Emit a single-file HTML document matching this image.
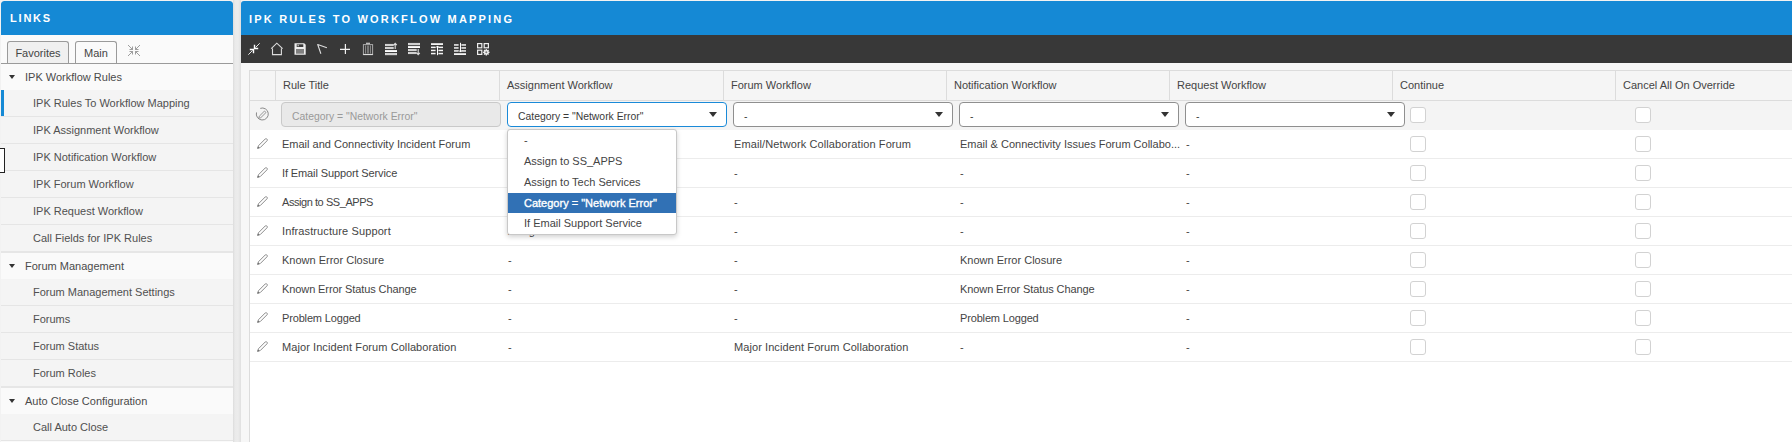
<!DOCTYPE html>
<html><head><meta charset="utf-8"><style>
*{box-sizing:border-box;margin:0;padding:0}
html,body{width:1792px;height:442px;overflow:hidden;background:linear-gradient(to right,#f2f2f2 0,#f2f2f2 233px,#dcdcdc 233px,#eaeaea 235px,#ececec 238px,#e0e0e0 241px,#f2f2f2 241px);font-family:"Liberation Sans",sans-serif;color:#444}
.abs{position:absolute}
#side{position:absolute;left:1px;top:1px;width:232px;height:441px;background:#fafafa;overflow:hidden;border-radius:3px 3px 0 0}
#side .hdr{position:absolute;left:0;top:0;width:232px;height:34px;background:#1589d5;border-radius:3px 3px 0 0}
#side .hdr span{position:absolute;left:9px;top:11px;color:#fff;font-size:11px;font-weight:bold;letter-spacing:1.8px}
.tab{position:absolute;top:40px;height:23px;border:1px solid #9a9a9a;border-bottom:none;border-radius:3px 3px 0 0;font-size:11px;color:#444;line-height:23px;text-align:center}
.tabline{position:absolute;left:0;top:62px;width:232px;height:1px;background:#9a9a9a}
.grp{position:absolute;left:0;width:232px;height:26px;background:#fafafa;font-size:11px;color:#4a4a4a;line-height:26px}
.grp .tri{position:absolute;left:8px;top:11px;width:0;height:0;border-left:3.5px solid transparent;border-right:3.5px solid transparent;border-top:4px solid #333}
.grp span{position:absolute;left:24px}
.ch{position:absolute;left:0;width:232px;height:27px;background:#f4f4f4;border-bottom:1px solid #e5e5e5;font-size:11px;color:#505050;line-height:26px}
.ch.last{height:28px;border-bottom:2px solid #e6e6e6}
.selbar{position:absolute;left:0;top:0;width:3px;height:26px;background:#1589d5}
.ch span{position:absolute;left:32px}
#main{position:absolute;left:241px;top:1px;width:1551px;height:441px;background:#f7f7f7;overflow:hidden;border-radius:3px 0 0 0}
#main .hdr{position:absolute;left:0;top:0;width:1551px;height:34px;background:#1589d5}
#main .hdr span{position:absolute;left:8px;top:12px;color:#fff;font-size:11px;font-weight:bold;letter-spacing:2.2px}
#tb{position:absolute;left:0;top:34px;width:1551px;height:28px;background:#383838}
#tb svg{position:absolute;top:8px}
#grid{position:absolute;left:249px;top:70px;width:1543px;height:372px;background:#fff;border-left:1px solid #dcdcdc;border-top:1px solid #dcdcdc}
.th{position:absolute;top:71px;height:30px;background:#f5f5f5;border-right:1px solid #dcdcdc;border-bottom:1px solid #dcdcdc;font-size:11px;color:#444;line-height:29px;padding-left:7px;white-space:nowrap}
.frow{position:absolute;left:250px;top:101px;width:1542px;height:29px;background:#f4f4f4}
.inp{position:absolute;left:281px;top:102px;width:220px;height:25px;background:#e9e9e9;border:1px solid #c9c9c9;border-radius:4px;font-size:10.4px;color:#999;line-height:27px;padding-left:10px;white-space:nowrap}
.sel{position:absolute;top:102px;width:220px;height:25px;background:#fff;border:1px solid #8f8f8f;border-radius:4px;font-size:10.4px;color:#3a3a3a;line-height:27px;padding-left:10px;white-space:nowrap}
.sel.focus{border:1.5px solid #1a8ad8}
.sel .arr{position:absolute;right:9px;top:9px;width:0;height:0;border-left:4.5px solid transparent;border-right:4.5px solid transparent;border-top:5px solid #333}
.cb{position:absolute;width:16px;height:16px;background:#fff;border:1px solid #d2d2d2;border-radius:3px;top:107px}
.row{position:absolute;left:250px;width:1542px;height:29px;border-bottom:1px solid #ececec;font-size:11px;color:#444;line-height:28px;white-space:nowrap}
.row span{position:absolute}
.row .cb{top:6px}
.pen{position:absolute;left:6px;top:7px}
#dd{position:absolute;left:507px;top:129px;width:170px;height:106px;background:#fff;border:1px solid #c8c8c8;border-radius:3px;box-shadow:0 2px 5px rgba(0,0,0,.18);font-size:11px;color:#444}
#dd div{position:absolute;left:0;width:168px;height:20px;line-height:20px;padding-left:16px;white-space:nowrap}
#dd div.hl{background:#3171b5;color:#fff;-webkit-text-stroke:0.35px #fff}
</style></head><body>
<div id="side">
<div class="hdr"><span>LINKS</span></div>
<div class="tab" style="left:6px;width:62px;background:#f0f0f0">Favorites</div>
<div class="tab" style="left:74px;width:42px;background:#fafafa">Main</div>
<svg class="abs" style="left:126px;top:43px" width="14" height="13" viewBox="0 0 14 13"><g fill="none" stroke="#8c8c8c" stroke-width="0.85"><path d="M1 1 L5.5 5.5 M5.5 2.5 V5.5 H2.5"/><path d="M13 1 L8.5 5.5 M8.5 2.5 V5.5 H11.5"/><path d="M1 12 L5.5 7.5 M5.5 10.5 V7.5 H2.5"/><path d="M13 12 L8.5 7.5 M8.5 10.5 V7.5 H11.5"/></g></svg>
<div class="tabline"></div>
<div class="grp" style="top:63px"><i class="tri"></i><span>IPK Workflow Rules</span></div>
<div class="ch" style="top:89px"><i class="selbar"></i><span>IPK Rules To Workflow Mapping</span></div>
<div class="ch" style="top:116px"><span>IPK Assignment Workflow</span></div>
<div class="ch" style="top:143px"><span>IPK Notification Workflow</span></div>
<div class="ch" style="top:170px"><span>IPK Forum Workflow</span></div>
<div class="ch" style="top:197px"><span>IPK Request Workflow</span></div>
<div class="ch last" style="top:224px"><span>Call Fields for IPK Rules</span></div>
<div class="grp" style="top:252px"><i class="tri"></i><span>Forum Management</span></div>
<div class="ch" style="top:278px"><span>Forum Management Settings</span></div>
<div class="ch" style="top:305px"><span>Forums</span></div>
<div class="ch" style="top:332px"><span>Forum Status</span></div>
<div class="ch last" style="top:359px"><span>Forum Roles</span></div>
<div class="grp" style="top:387px"><i class="tri"></i><span>Auto Close Configuration</span></div>
<div class="ch" style="top:413px"><span>Call Auto Close</span></div>
</div>
<div id="main">
<div class="hdr"><span>IPK RULES TO WORKFLOW MAPPING</span></div>
<div id="tb"></div>
</div>
<div id="grid"></div>
<div class="th" style="left:250px;width:26px"></div>
<div class="th" style="left:276px;width:224px">Rule Title</div>
<div class="th" style="left:500px;width:224px">Assignment Workflow</div>
<div class="th" style="left:724px;width:223px">Forum Workflow</div>
<div class="th" style="left:947px;width:223px">Notification Workflow</div>
<div class="th" style="left:1170px;width:223px">Request Workflow</div>
<div class="th" style="left:1393px;width:223px">Continue</div>
<div class="th" style="left:1616px;width:226px">Cancel All On Override</div>
<div class="frow"></div>
<svg class="abs" style="left:255px;top:107px" width="15" height="15" viewBox="0 0 15 15"><path d="M5.25 1.36 A6 6 0 1 1 1.5 5.45" fill="none" stroke="#8a8a8a" stroke-width="1"/><path d="M3.7 11.3 L4.3 9.2 L9.5 4 L11 5.5 L5.8 10.7 Z" fill="none" stroke="#8a8a8a" stroke-width="0.9" stroke-linejoin="round"/></svg>
<div class="inp">Category = "Network Error"</div>
<div class="sel focus" style="left:507px"><span>Category = "Network Error"</span><i class="arr"></i></div>
<div class="sel" style="left:733px"><span>-</span><i class="arr"></i></div>
<div class="sel" style="left:959px"><span>-</span><i class="arr"></i></div>
<div class="sel" style="left:1185px"><span>-</span><i class="arr"></i></div>
<div class="cb" style="left:1410px"></div>
<div class="cb" style="left:1635px"></div>
<div class="row" style="top:130px"><svg class="pen" width="13" height="13" viewBox="0 0 13 13"><path d="M1.6 11.4 L2.5 8.7 L9.3 1.9 Q10 1.3 10.7 1.9 L11.1 2.3 Q11.7 3 11.1 3.7 L4.3 10.5 Z" fill="none" stroke="#858585" stroke-width="0.95" stroke-linejoin="round"/><path d="M1.4 11.6 L2 9.6 L3.4 11 Z" fill="#666"/></svg><span style="left:32px">Email and Connectivity Incident Forum</span><span style="left:484px;letter-spacing:0.106px">Email/Network Collaboration Forum</span><span style="left:710px">Email &amp; Connectivity Issues Forum Collabo...</span><span style="left:936px">-</span><i class="cb" style="left:1160px"></i><i class="cb" style="left:1385px"></i></div>
<div class="row" style="top:159px"><svg class="pen" width="13" height="13" viewBox="0 0 13 13"><path d="M1.6 11.4 L2.5 8.7 L9.3 1.9 Q10 1.3 10.7 1.9 L11.1 2.3 Q11.7 3 11.1 3.7 L4.3 10.5 Z" fill="none" stroke="#858585" stroke-width="0.95" stroke-linejoin="round"/><path d="M1.4 11.6 L2 9.6 L3.4 11 Z" fill="#666"/></svg><span style="left:32px;letter-spacing:-0.117px">If Email Support Service</span><span style="left:484px">-</span><span style="left:710px">-</span><span style="left:936px">-</span><i class="cb" style="left:1160px"></i><i class="cb" style="left:1385px"></i></div>
<div class="row" style="top:188px"><svg class="pen" width="13" height="13" viewBox="0 0 13 13"><path d="M1.6 11.4 L2.5 8.7 L9.3 1.9 Q10 1.3 10.7 1.9 L11.1 2.3 Q11.7 3 11.1 3.7 L4.3 10.5 Z" fill="none" stroke="#858585" stroke-width="0.95" stroke-linejoin="round"/><path d="M1.4 11.6 L2 9.6 L3.4 11 Z" fill="#666"/></svg><span style="left:32px;letter-spacing:-0.438px">Assign to SS_APPS</span><span style="left:484px">-</span><span style="left:710px">-</span><span style="left:936px">-</span><i class="cb" style="left:1160px"></i><i class="cb" style="left:1385px"></i></div>
<div class="row" style="top:217px"><svg class="pen" width="13" height="13" viewBox="0 0 13 13"><path d="M1.6 11.4 L2.5 8.7 L9.3 1.9 Q10 1.3 10.7 1.9 L11.1 2.3 Q11.7 3 11.1 3.7 L4.3 10.5 Z" fill="none" stroke="#858585" stroke-width="0.95" stroke-linejoin="round"/><path d="M1.4 11.6 L2 9.6 L3.4 11 Z" fill="#666"/></svg><span style="left:32px;letter-spacing:0.110px">Infrastructure Support</span><span style="left:258px">Assign to Tech Services</span><span style="left:484px">-</span><span style="left:710px">-</span><span style="left:936px">-</span><i class="cb" style="left:1160px"></i><i class="cb" style="left:1385px"></i></div>
<div class="row" style="top:246px"><svg class="pen" width="13" height="13" viewBox="0 0 13 13"><path d="M1.6 11.4 L2.5 8.7 L9.3 1.9 Q10 1.3 10.7 1.9 L11.1 2.3 Q11.7 3 11.1 3.7 L4.3 10.5 Z" fill="none" stroke="#858585" stroke-width="0.95" stroke-linejoin="round"/><path d="M1.4 11.6 L2 9.6 L3.4 11 Z" fill="#666"/></svg><span style="left:32px">Known Error Closure</span><span style="left:258px">-</span><span style="left:484px">-</span><span style="left:710px">Known Error Closure</span><span style="left:936px">-</span><i class="cb" style="left:1160px"></i><i class="cb" style="left:1385px"></i></div>
<div class="row" style="top:275px"><svg class="pen" width="13" height="13" viewBox="0 0 13 13"><path d="M1.6 11.4 L2.5 8.7 L9.3 1.9 Q10 1.3 10.7 1.9 L11.1 2.3 Q11.7 3 11.1 3.7 L4.3 10.5 Z" fill="none" stroke="#858585" stroke-width="0.95" stroke-linejoin="round"/><path d="M1.4 11.6 L2 9.6 L3.4 11 Z" fill="#666"/></svg><span style="left:32px;letter-spacing:-0.096px">Known Error Status Change</span><span style="left:258px">-</span><span style="left:484px">-</span><span style="left:710px;letter-spacing:-0.096px">Known Error Status Change</span><span style="left:936px">-</span><i class="cb" style="left:1160px"></i><i class="cb" style="left:1385px"></i></div>
<div class="row" style="top:304px"><svg class="pen" width="13" height="13" viewBox="0 0 13 13"><path d="M1.6 11.4 L2.5 8.7 L9.3 1.9 Q10 1.3 10.7 1.9 L11.1 2.3 Q11.7 3 11.1 3.7 L4.3 10.5 Z" fill="none" stroke="#858585" stroke-width="0.95" stroke-linejoin="round"/><path d="M1.4 11.6 L2 9.6 L3.4 11 Z" fill="#666"/></svg><span style="left:32px;letter-spacing:-0.154px">Problem Logged</span><span style="left:258px">-</span><span style="left:484px">-</span><span style="left:710px;letter-spacing:-0.154px">Problem Logged</span><span style="left:936px">-</span><i class="cb" style="left:1160px"></i><i class="cb" style="left:1385px"></i></div>
<div class="row" style="top:333px"><svg class="pen" width="13" height="13" viewBox="0 0 13 13"><path d="M1.6 11.4 L2.5 8.7 L9.3 1.9 Q10 1.3 10.7 1.9 L11.1 2.3 Q11.7 3 11.1 3.7 L4.3 10.5 Z" fill="none" stroke="#858585" stroke-width="0.95" stroke-linejoin="round"/><path d="M1.4 11.6 L2 9.6 L3.4 11 Z" fill="#666"/></svg><span style="left:32px;letter-spacing:0.079px">Major Incident Forum Collaboration</span><span style="left:258px">-</span><span style="left:484px;letter-spacing:0.079px">Major Incident Forum Collaboration</span><span style="left:710px">-</span><span style="left:936px">-</span><i class="cb" style="left:1160px"></i><i class="cb" style="left:1385px"></i></div>
<div id="dd">
<div style="top:0px;height:21px;line-height:21px">-</div>
<div style="top:21px;height:21px;line-height:21px">Assign to SS_APPS</div>
<div style="top:42px;height:21px;line-height:21px">Assign to Tech Services</div>
<div class="hl" style="top:63px;height:20px;line-height:20px">Category = "Network Error"</div>
<div style="top:83px;height:21px;line-height:21px">If Email Support Service</div>
</div>
<svg class="abs" style="left:247px;top:42px" width="14" height="14" viewBox="0 0 14 14"><g stroke="#e6e6e6" fill="none" stroke-width="1"><path d="M1.3 12.7 L5.5 8.5 M8.5 5.5 L12.7 1.3"/></g><g stroke="#fff" fill="none" stroke-width="1.4"><path d="M7.5 2.8 V6.5 H11.2"/><path d="M2.8 7.5 H6.5 V11.2"/></g></svg>
<svg class="abs" style="left:270px;top:42px" width="14" height="14" viewBox="0 0 14 14"><path d="M1.2 6.6 L6.8 1.2 L12.6 6.6 M2.5 6.6 V12.6 H11.4 V6.6" fill="none" stroke="#ddd" stroke-width="1.1"/></svg>
<svg class="abs" style="left:293px;top:42px" width="14" height="14" viewBox="0 0 14 14"><path d="M1.5 1.3 H11.2 L12.7 2.8 V12.7 H1.5 Z" fill="#eee"/><rect x="3.7" y="2.3" width="6.6" height="2.7" fill="#3a3a3a"/><rect x="4.6" y="2.7" width="1.1" height="1.6" fill="#ddd"/><rect x="3" y="7" width="8" height="4.7" fill="#808080"/></svg>
<svg class="abs" style="left:316px;top:43px" width="12" height="12" viewBox="0 0 12 12"><path d="M4.9 10.8 L1.7 1.5 L10.9 4.7" fill="none" stroke="#ddd" stroke-width="1.1" stroke-linejoin="round"/></svg>
<svg class="abs" style="left:339px;top:43px" width="12" height="12" viewBox="0 0 12 12"><path d="M1 6.4 H11 M6.4 1 V11" fill="none" stroke="#f2f2f2" stroke-width="1.2"/></svg>
<svg class="abs" style="left:362px;top:42px" width="12" height="14" viewBox="0 0 12 14"><path d="M4 1.3 H8" stroke="#ccc" stroke-width="1.2"/><rect x="1.4" y="2.6" width="9.2" height="9.9" fill="none" stroke="#aaa" stroke-width="1"/><path d="M1.2 12.5 H10.8" stroke="#ddd" stroke-width="1.2"/><path d="M3.6 3.5 V11.5 M8.4 3.5 V11.5" stroke="#999" stroke-width="0.9"/><rect x="5" y="3.5" width="2" height="8" fill="#777"/></svg>
<svg class="abs" style="left:384px;top:42px" width="14" height="14" viewBox="0 0 14 14"><g fill="#d0d0d0" stroke="#f4f4f4" stroke-width="0.5"><rect x="1.25" y="2.2" width="8" height="1.6"/><rect x="1.25" y="5.2" width="8" height="1.6"/><rect x="1.25" y="11.2" width="11.5" height="1.7"/></g><rect x="1" y="8.1" width="12" height="1.9" fill="#fff"/><path d="M11.2 7 V1.5 M9.6 3.2 L11.2 1.3 L12.8 3.2" fill="none" stroke="#ddd" stroke-width="1.1"/></svg>
<svg class="abs" style="left:407px;top:42px" width="14" height="14" viewBox="0 0 14 14"><g fill="#d0d0d0" stroke="#f4f4f4" stroke-width="0.5"><rect x="1.25" y="1.2" width="11.5" height="1.7"/><rect x="1.25" y="7.2" width="8" height="1.6"/><rect x="1.25" y="10.2" width="8" height="1.6"/></g><rect x="1" y="4.1" width="12" height="1.9" fill="#fff"/><path d="M11.2 7 V12.5 M9.6 10.8 L11.2 12.7 L12.8 10.8" fill="none" stroke="#ddd" stroke-width="1.1"/></svg>
<svg class="abs" style="left:430px;top:42px" width="14" height="14" viewBox="0 0 14 14"><g fill="#f4f4f4"><rect x="1" y="1.2" width="12" height="1.8"/><rect x="1" y="4.6" width="4.6" height="1.5"/><rect x="8.4" y="4.6" width="4.6" height="1.5"/><rect x="1" y="7.7" width="4.6" height="1.5"/><rect x="8.4" y="7.7" width="4.6" height="1.5"/><rect x="1" y="10.8" width="4.6" height="1.5"/><rect x="8.4" y="10.8" width="4.6" height="1.5"/></g><path d="M7.5 13.2 V4 M6 5.6 L7.5 3.9 L9 5.6" fill="none" stroke="#fff" stroke-width="1"/></svg>
<svg class="abs" style="left:453px;top:42px" width="14" height="14" viewBox="0 0 14 14"><g fill="#f4f4f4"><rect x="1" y="11.2" width="12" height="1.8"/><rect x="1" y="2.2" width="4.6" height="1.5"/><rect x="8.4" y="2.2" width="4.6" height="1.5"/><rect x="1" y="5.2" width="4.6" height="1.5"/><rect x="8.4" y="5.2" width="4.6" height="1.5"/><rect x="1" y="8.2" width="4.6" height="1.5"/><rect x="8.4" y="8.2" width="4.6" height="1.5"/></g><path d="M7.5 0.8 V10 M6 8.4 L7.5 10.1 L9 8.4" fill="none" stroke="#fff" stroke-width="1"/></svg>
<svg class="abs" style="left:476px;top:42px" width="14" height="14" viewBox="0 0 14 14"><g fill="none" stroke="#eee" stroke-width="1.2"><rect x="1.6" y="1.6" width="4.2" height="4.2"/><rect x="8.2" y="1.6" width="4.2" height="4.2"/><rect x="1.6" y="8.2" width="4.2" height="4.2"/></g><g fill="#eee"><circle cx="10.3" cy="10.3" r="2.4"/><rect x="9.6" y="7.1" width="1.4" height="6.4"/><rect x="7.1" y="9.6" width="6.4" height="1.4"/><rect x="9.6" y="7.1" width="1.4" height="6.4" transform="rotate(45 10.3 10.3)"/><rect x="9.6" y="7.1" width="1.4" height="6.4" transform="rotate(-45 10.3 10.3)"/></g><circle cx="10.3" cy="10.3" r="1" fill="#777"/></svg>
<div class="abs" style="left:-2px;top:148px;width:7px;height:25px;border:1px solid #222;background:#fff"></div>
</body></html>
